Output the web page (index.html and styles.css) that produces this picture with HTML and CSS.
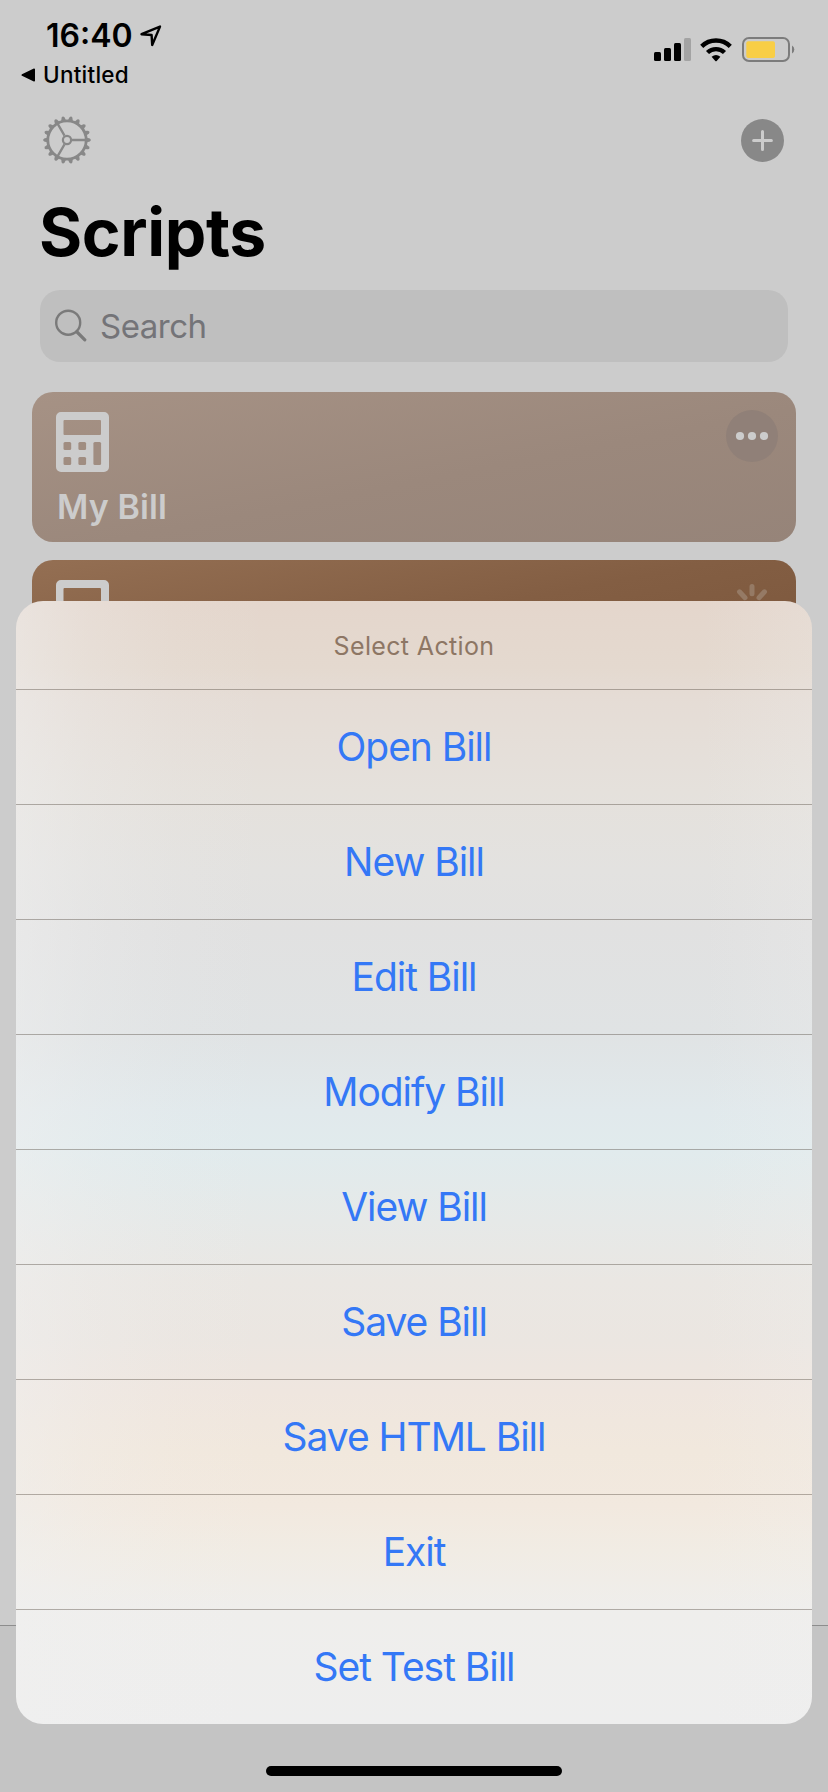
FILE: index.html
```html
<!DOCTYPE html>
<html lang="en">
<head>
<meta charset="utf-8">
<title>Scripts</title>
<link rel="stylesheet" href="styles.css">
</head>
<body>
<div class="screen">
  <header class="status">
    <div class="status-left">
      <div class="clock"><span class="time">16:40</span>
        <svg class="location" width="22" height="22" viewBox="0 0 22 22"><path d="M1.5 9.2 L20 1.6 L12.2 20 L11.6 10 Z" fill="none" stroke="#000" stroke-width="2.4" stroke-linejoin="round"/></svg>
      </div>
      <div class="back">
        <svg width="15" height="14" viewBox="0 0 15 14"><path d="M1.3 7 L13.2 1.3 V12.7 Z" stroke="#000" stroke-width="1.6" stroke-linejoin="round"/></svg>
        <span class="back-label">Untitled</span>
      </div>
    </div>
    <div class="status-right">
      <svg width="37" height="24" viewBox="0 0 37 24"><rect y="14" width="7" height="9" rx="1.5"/><rect x="10" y="10" width="7" height="13" rx="1.5"/><rect x="20" y="5" width="7" height="18" rx="1.5"/><rect x="30" width="7" height="23" rx="1.5" fill="#a3a3a3"/></svg>
      <svg class="wifi" width="32" height="24" viewBox="0 0 32 24"><g fill="none" stroke="#000" stroke-width="4.4"><path d="M1.7 8.3 A20.5 20.5 0 0 1 30.3 8.3"/><path d="M7.5 14.5 A12.3 12.3 0 0 1 24.5 14.5"/></g><path d="M11.6 18.8 Q16 15.4 20.4 18.8 L16.7 22.9 Q16 23.6 15.3 22.9 Z"/></svg>
      <svg class="battery" width="54" height="25" viewBox="0 0 54 25"><rect x="1" y="1" width="46" height="23" rx="6" fill="none" stroke="#7c7c7c" stroke-width="2"/><rect x="4.3" y="4.2" width="28.7" height="16.8" rx="2" fill="#f8ce46"/><path d="M50 8.5 A4.6 4.6 0 0 1 50 16.5 Z" fill="#7c7c7c"/></svg>
    </div>
  </header>

  <nav class="toolbar">
    <svg width="48" height="48" viewBox="-24 -24 48 48" stroke="#888" fill="none">
      <defs><path id="tooth" d="M18.500 -2.800 L22.800 -1.500 Q24.900 0 22.800 1.500 L18.500 2.800 Z" fill="#888" stroke="none"/></defs>
      <circle r="19.2" stroke-width="2.8"/>
      <circle r="4.1" stroke-width="2.2"/>
      <path d="M5 0 H18.500 M-2.5 -4.33 L-9.300 -16.100 M-2.5 4.33 L-9.300 16.100" stroke-width="2.3"/>
      <use href="#tooth"/><use href="#tooth" transform="rotate(20)"/><use href="#tooth" transform="rotate(40)"/><use href="#tooth" transform="rotate(60)"/><use href="#tooth" transform="rotate(80)"/><use href="#tooth" transform="rotate(100)"/><use href="#tooth" transform="rotate(120)"/><use href="#tooth" transform="rotate(140)"/><use href="#tooth" transform="rotate(160)"/><use href="#tooth" transform="rotate(180)"/><use href="#tooth" transform="rotate(200)"/><use href="#tooth" transform="rotate(220)"/><use href="#tooth" transform="rotate(240)"/><use href="#tooth" transform="rotate(260)"/><use href="#tooth" transform="rotate(280)"/><use href="#tooth" transform="rotate(300)"/><use href="#tooth" transform="rotate(320)"/><use href="#tooth" transform="rotate(340)"/>
    </svg>
    <svg width="43" height="43" viewBox="0 0 43 43"><circle cx="21.5" cy="21.5" r="21.5" fill="#888"/><path d="M21.5 12.6 V30.4 M12.6 21.5 H30.4" stroke="#ccc" stroke-width="3" stroke-linecap="round"/></svg>
  </nav>

  <h1 class="title"><span>Scripts</span></h1>

  <div class="search">
    <svg width="32" height="33" viewBox="0 0 32 33" fill="none" stroke="#7a7a7a"><circle cx="13.2" cy="13.7" r="12" stroke-width="2.4"/><path d="M22 23 L29.8 30.8" stroke-width="3.2" stroke-linecap="round"/></svg>
    <span class="search-label">Search</span>
  </div>

  <main class="cards">
    <section class="card card-muted">
      <div class="card-main">
        <svg width="53" height="60" viewBox="0 0 53 60"><path fill="#ccc" fill-rule="evenodd" d="M5 0H48a5 5 0 0 1 5 5V55a5 5 0 0 1-5 5H5a5 5 0 0 1-5-5V5a5 5 0 0 1 5-5Z M8.500 8a1 1 0 0 0-1 1V22a1 1 0 0 0 1 1H44a1 1 0 0 0 1-1V9a1 1 0 0 0-1-1Z"/><g fill="#a08d81"><rect x="7.500" y="30" width="7.700" height="8" rx="1.500"/><rect x="22.400" y="30" width="7.700" height="8" rx="1.500"/><rect x="7.500" y="45" width="7.700" height="8" rx="1.500"/><rect x="22.400" y="45" width="7.700" height="8" rx="1.500"/><rect x="37.400" y="30" width="7.700" height="23" rx="1.500"/></g></svg>
        <span class="card-name">My Bill</span>
      </div>
      <svg class="more" width="52" height="52" viewBox="0 0 52 52"><circle cx="26" cy="26" r="26" fill="#908078"/><g fill="#ccc"><circle cx="14" cy="26" r="4.100"/><circle cx="26" cy="26" r="4.100"/><circle cx="38" cy="26" r="4.100"/></g></svg>
    </section>
    <section class="card card-brown">
      <div class="card-main">
        <svg width="53" height="60" viewBox="0 0 53 60"><path fill="#ccc" fill-rule="evenodd" d="M5 0H48a5 5 0 0 1 5 5V55a5 5 0 0 1-5 5H5a5 5 0 0 1-5-5V5a5 5 0 0 1 5-5Z M8.500 8a1 1 0 0 0-1 1V22a1 1 0 0 0 1 1H44a1 1 0 0 0 1-1V9a1 1 0 0 0-1-1Z"/></svg>
      </div>
      <svg class="more" width="52" height="52" viewBox="-26 -26 52 52" stroke="#957a65" stroke-width="5" stroke-linecap="round"><path d="M0 -17.500 V-10.200 M-12.500 -12.200 L-7 -6.300 M12.500 -12.200 L7 -6.300"/></svg>
    </section>
  </main>

  <footer class="tabbar"><div class="home"></div></footer>

  <div class="sheet">
    <div class="sheet-title"><span>Select Action</span></div>
    <div class="action"><span>Open Bill</span></div>
    <div class="action"><span>New Bill</span></div>
    <div class="action"><span>Edit Bill</span></div>
    <div class="action"><span>Modify Bill</span></div>
    <div class="action"><span>View Bill</span></div>
    <div class="action"><span>Save Bill</span></div>
    <div class="action"><span>Save HTML Bill</span></div>
    <div class="action"><span>Exit</span></div>
    <div class="action"><span>Set Test Bill</span></div>
  </div>
</div>
</body>
</html>
```
FILE: styles.css
```css
* { box-sizing: border-box; }
body { margin: 0; font-family: Inter, "Liberation Sans", sans-serif; }
svg { display: block; flex: none; }
.screen {
  position: relative;
  width: 828px;
  height: 1792px;
  overflow: hidden;
  background: #ccc;
  display: flex;
  flex-direction: column;
}
.status {
  height: 96px;
  flex: none;
  display: flex;
  justify-content: space-between;
  padding: 16px 34px 0 21px;
}
.clock { display: flex; align-items: center; height: 40px; padding-left: 25px; gap: 7px; }
.time { font-size: 32px; font-weight: 600; line-height: 40px; letter-spacing: 0; }
.back { display: flex; align-items: center; gap: 7px; height: 37px; }
.back-label { font-size: 22.5px; font-weight: 500; line-height: 37px; letter-spacing: 0.25px; }
.status-right { display: flex; align-items: flex-start; padding-top: 22px; }
.wifi { margin-left: 9px; }
.battery { margin: -1px -2px 0 10px; }
.toolbar {
  height: 88px;
  flex: none;
  display: flex;
  align-items: center;
  justify-content: space-between;
  padding: 0 44px 0 43px;
}
.title {
  margin: 0;
  height: 106px;
  padding: 8px 0 0 39px;
  font-size: 66px;
  line-height: 80px;
  font-weight: 700;
  letter-spacing: -0.4px;
}
.search {
  height: 72px;
  margin: 0 40px;
  flex: none;
  display: flex;
  align-items: center;
  gap: 13px;
  padding: 0 16px 2px 15px;
  border-radius: 20px;
  background: #bfbfbf;
}
.search-label { font-size: 33px; color: #747478; letter-spacing: -0.5px; padding-top: 2px; }
.cards { flex: 1; display: flex; flex-direction: column; gap: 18px; padding: 30px 32px 0; }
.card {
  height: 150px;
  border-radius: 21px;
  display: flex;
  justify-content: space-between;
  padding: 20px 18px 0 24px;
}
.card-muted { background: linear-gradient(169deg, #a69285 0%, #9b887c 55%, #968479 100%); }
.card-brown { background: linear-gradient(169deg, #946f53 0%, #835e43 45%, #795439 100%); }
.card-main { display: flex; flex-direction: column; gap: 15px; }
.card-name { font-size: 34px; font-weight: 600; line-height: 40px; color: #ccc; letter-spacing: 0.1px; padding-left: 1px; }
.more { margin-top: -2px; }
.tabbar {
  height: 167px;
  flex: none;
  border-top: 1px solid #8d8d8d;
  background: #c4c4c4;
  display: flex;
  justify-content: center;
  align-items: flex-end;
  padding-bottom: 16px;
}
.home { width: 296px; height: 10px; border-radius: 5px; background: #000; }
.sheet {
  position: absolute;
  left: 16px;
  top: 601px;
  width: 796px;
  height: 1123px;
  border-radius: 27px;
  overflow: hidden;
  background:
    linear-gradient(90deg, rgba(240,240,240,.5) 0, rgba(240,240,240,.26) 9%, rgba(240,240,240,.08) 20%, rgba(240,240,240,0) 32%, rgba(240,240,240,0) 86%, rgba(240,240,240,.2) 100%),
    linear-gradient(180deg, #e4d6cc 0, #e4d9cf 66px, #e5dcd5 95px, #e5e1dc 190px, #e3e2e0 270px, #e1e1e1 330px, #e0e3e4 430px, #e1e9ec 510px, #e1ebed 550px, #e6e9e8 620px, #eae7e3 680px, #ebe6e1 740px, #efe6df 790px, #f1e8dd 850px, #f2e9df 905px, #f1ece4 950px, #efeeec 1010px, #eeeeee 1123px);
}
.sheet-title {
  height: 88px;
  text-align: center;
  font-size: 25px;
  line-height: 91px;
  color: #8d7664;
  letter-spacing: 0.35px;
}
.action {
  height: 115px;
  border-top: 1px solid rgba(70, 60, 50, .38);
  text-align: center;
  font-size: 39px;
  line-height: 114px;
  color: #3478f6;
  letter-spacing: -1.05px;
}
```
